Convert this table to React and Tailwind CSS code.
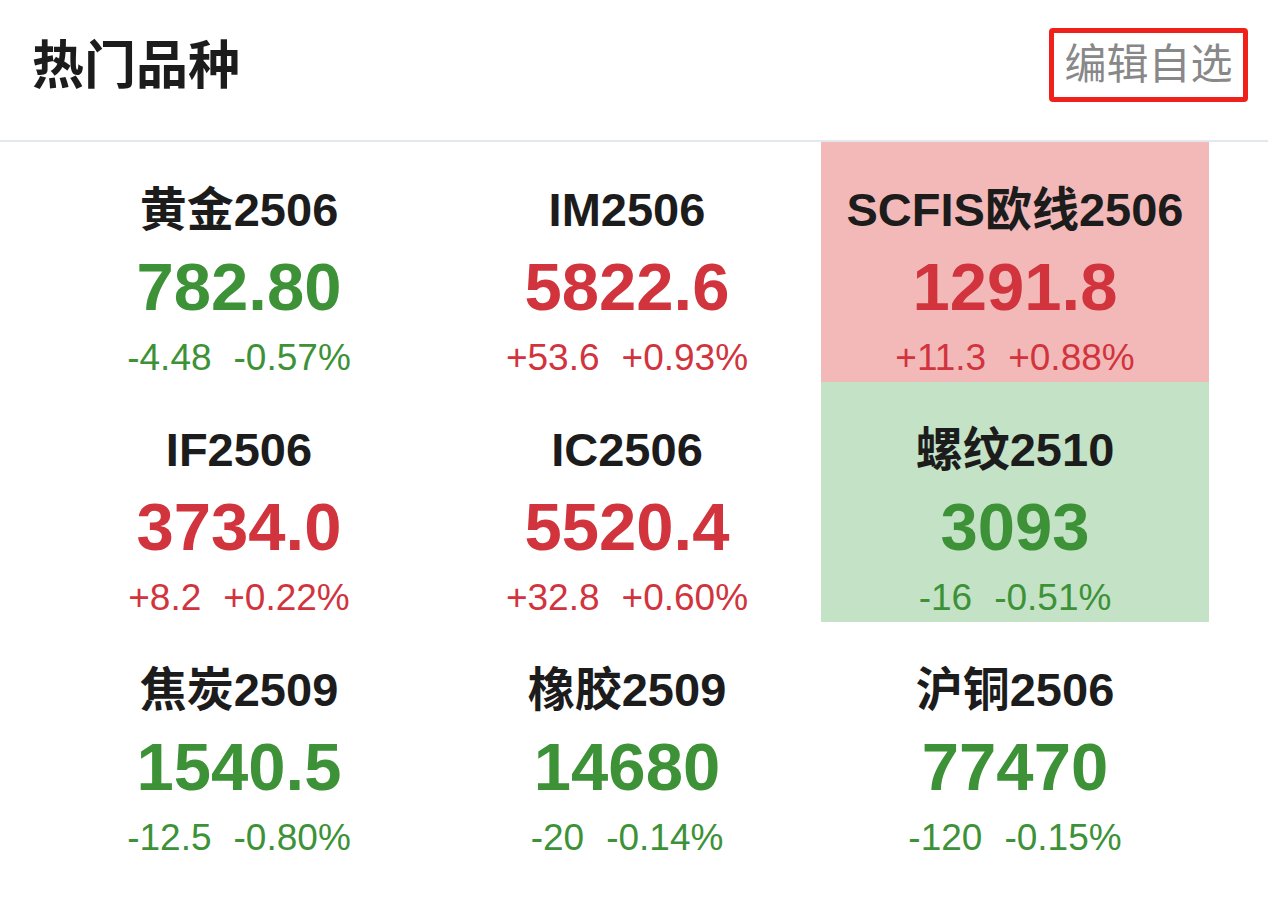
const items = [
  { name: '黄金2506', price: '782.80', chg: '-4.48', pct: '-0.57%', up: false },
  { name: 'IM2506', price: '5822.6', chg: '+53.6', pct: '+0.93%', up: true },
  { name: 'SCFIS欧线2506', price: '1291.8', chg: '+11.3', pct: '+0.88%', up: true, bg: 'bg-[#f3b9b9]' },
  { name: 'IF2506', price: '3734.0', chg: '+8.2', pct: '+0.22%', up: true },
  { name: 'IC2506', price: '5520.4', chg: '+32.8', pct: '+0.60%', up: true },
  { name: '螺纹2510', price: '3093', chg: '-16', pct: '-0.51%', up: false, bg: 'bg-[#c3e2c6]' },
  { name: '焦炭2509', price: '1540.5', chg: '-12.5', pct: '-0.80%', up: false },
  { name: '橡胶2509', price: '14680', chg: '-20', pct: '-0.14%', up: false },
  { name: '沪铜2506', price: '77470', chg: '-120', pct: '-0.15%', up: false },
];

const Cell = ({ item }) => {
  const color = item.up ? 'text-[#d1343d]' : 'text-[#3d9238]';
  return (
    <div className={`flex flex-col items-center h-[240px] pt-[40px] ${item.bg || ''}`}>
      {/* contract name */}
      <div className="text-[47px] leading-[56px] font-bold text-[#1c1c1c]">{item.name}</div>
      {/* last price */}
      <div className={`mt-[11px] text-[67px] leading-[76px] font-bold ${color}`}>{item.price}</div>
      {/* change + percent */}
      <div className={`mt-[11px] flex gap-[22px] text-[37px] leading-[44px] ${color}`}>
        <span>{item.chg}</span>
        <span>{item.pct}</span>
      </div>
    </div>
  );
};

export default function App() {
  return (
    <div
      className="w-[1268px] h-[901px] bg-white overflow-hidden"
      style={{ fontFamily: '"Liberation Sans", "Noto Sans CJK SC", sans-serif' }}
    >
      {/* Header */}
      <div className="h-[142px] flex items-center justify-between pl-[32px] pr-[20px] pb-[8px] border-b-2 border-[#e3e7f0]">
        <h1 className="text-[52px] leading-[60px] font-bold text-[#1c1c1c]">热门品种</h1>
        <div className="w-[199px] h-[74px] mt-[-2px] flex items-center justify-center border-[5px] border-[#f0201a] rounded-[4px]">
          <span className="text-[42px] leading-[50px] text-[#888888]">编辑自选</span>
        </div>
      </div>

      {/* Grid */}
      <div className="grid grid-cols-3 w-[1164px] ml-[45px]">
        {items.map((item) => (
          <Cell key={item.name} item={item} />
        ))}
      </div>
    </div>
  );
}
